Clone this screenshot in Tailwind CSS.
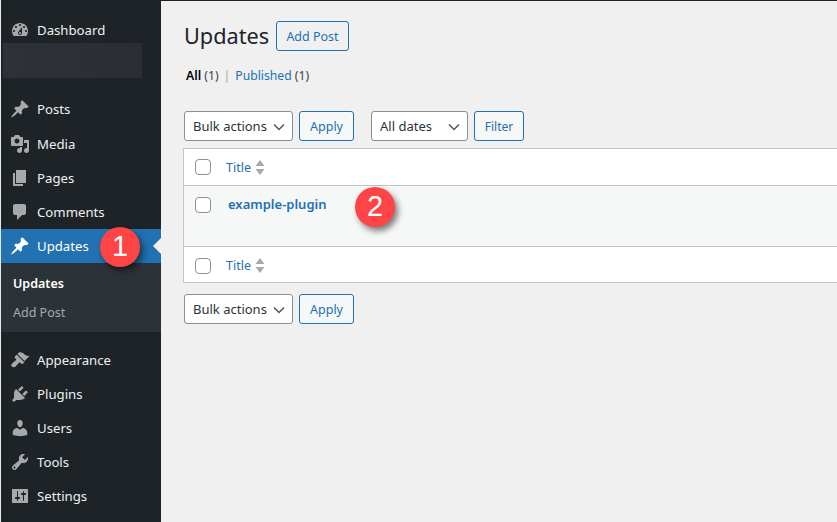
<!DOCTYPE html>
<html lang="en">
<head>
    <meta charset="UTF-8">
    <title>Updates</title>
    <script src="https://cdn.jsdelivr.net/npm/@tailwindcss/browser@4"></script>
</head>
<body class="w-[837px] h-[522px] overflow-hidden font-['Noto_Sans','Open_Sans',sans-serif] bg-[#f0f0f1]">
<div class="relative flex h-[522px] w-[837px] overflow-hidden">

    <!-- sidebar -->
    <aside class="w-[161px] h-full shrink-0 bg-[#1d2327] border-l border-[#e8e8e8] text-[13.2px] text-[#f0f0f1] [&>a]:pt-[2px] [&_svg]:-mt-[2px]">
        <a class="flex items-center h-[34px] mt-[13px] pl-[9px] gap-[7px]">
            <svg class="w-5 h-5 fill-[#a7aaad]" viewBox="0 0 20 20"><path d="M3.76 16h12.48c1.1-1.37 1.76-3.11 1.76-5 0-4.42-3.58-8-8-8s-8 3.58-8 8c0 1.89.66 3.63 1.76 5zM10 4c.55 0 1 .45 1 1s-.45 1-1 1-1-.45-1-1 .45-1 1-1zM6 6c.55 0 1 .45 1 1s-.45 1-1 1-1-.45-1-1 .45-1 1-1zm8 0c.55 0 1 .45 1 1s-.45 1-1 1-1-.45-1-1 .45-1 1-1zm-5.37 5.55L12 7v6c0 1.1-.9 2-2 2s-2-.9-2-2c0-.57.24-1.08.63-1.45zM4 10c.55 0 1 .45 1 1s-.45 1-1 1-1-.45-1-1 .45-1 1-1zm12 0c.55 0 1 .45 1 1s-.45 1-1 1-1-.45-1-1 .45-1 1-1zm-5 3c0-.55-.45-1-1-1s-1 .45-1 1 .45 1 1 1 1-.45 1-1z"/></svg>
            Dashboard
        </a>
        <div class="w-[139px] h-[35px] -mt-[4px] ml-[2px] bg-gradient-to-r from-[#2e3137] to-[#2a2e34]"></div>

        <a class="flex items-center h-[34px] mt-[14px] pl-[9px] gap-[7px]">
            <svg class="w-5 h-5 fill-[#a7aaad]" viewBox="0 0 20 20"><path d="M10.44 3.02l1.82-1.82 6.36 6.35-1.83 1.82c-1.05-.68-2.48-.57-3.41.36l-.75.75c-.92.93-1.04 2.35-.35 3.41l-1.83 1.82-2.41-2.41-2.8 2.79c-.42.42-3.38 2.71-3.8 2.29s1.86-3.39 2.28-3.81l2.79-2.79L4.1 9.36l1.83-1.82c1.05.69 2.48.57 3.4-.36l.75-.75c.93-.92 1.05-2.35.36-3.41z"/></svg>
            Posts
        </a>
        <a class="flex items-center h-[34px] mt-px pl-[9px] gap-[7px]">
            <svg class="w-5 h-5 fill-[#a7aaad]" viewBox="0 0 20 20"><path d="M13 11V4c0-.55-.45-1-1-1h-1.67L9 1H5L3.67 3H2c-.55 0-1 .45-1 1v7c0 .55.45 1 1 1h10c.55 0 1-.45 1-1zM7 4.5c1.38 0 2.5 1.12 2.5 2.5S8.38 9.5 7 9.5 4.5 8.38 4.5 7 5.62 4.5 7 4.5zM14 6h5v10.5c0 1.38-1.12 2.5-2.5 2.5S14 17.88 14 16.5s1.12-2.5 2.5-2.5c.17 0 .34.02.5.05V9h-3V6zm-4 8.05V13h2v3.5c0 1.38-1.12 2.5-2.5 2.5S7 17.88 7 16.5 8.12 14 9.5 14c.17 0 .34.02.5.05z"/></svg>
            Media
        </a>
        <a class="flex items-center h-[34px] pl-[9px] gap-[7px]">
            <svg class="w-5 h-5 fill-[#a7aaad]" viewBox="0 0 20 20"><path d="M6 15V2h10v13H6zm-1 1h8v2H3V5h2v11z"/></svg>
            Pages
        </a>
        <a class="flex items-center h-[34px] pl-[9px] gap-[7px]">
            <svg class="w-5 h-5 fill-[#a7aaad]" viewBox="0 0 20 20"><path d="M5 2h9c1.1 0 2 .9 2 2v7c0 1.1-.9 2-2 2h-2l-5 5v-5H5c-1.1 0-2-.9-2-2V4c0-1.1.9-2 2-2z"/></svg>
            Comments
        </a>

        <!-- current item -->
        <a class="relative flex items-center h-[34px] pl-[9px] gap-[7px] bg-[#2271b1] text-white">
            <svg class="w-5 h-5 fill-white" viewBox="0 0 20 20"><path d="M10.44 3.02l1.82-1.82 6.36 6.35-1.83 1.82c-1.05-.68-2.48-.57-3.41.36l-.75.75c-.92.93-1.04 2.35-.35 3.41l-1.83 1.82-2.41-2.41-2.8 2.79c-.42.42-3.38 2.71-3.8 2.29s1.86-3.39 2.28-3.81l2.79-2.79L4.1 9.36l1.83-1.82c1.05.69 2.48.57 3.4-.36l.75-.75c.93-.92 1.05-2.35.36-3.41z"/></svg>
            Updates
            <span class="absolute right-0 top-[9px] border-y-[8px] border-r-[8px] border-y-transparent border-r-[#f0f0f1]"></span>
        </a>
        <div class="h-[69px] bg-[#2c3338] pt-[7px] text-[12.5px]">
            <a class="flex items-center h-[29px] pl-[12px] font-semibold text-white">Updates</a>
            <a class="flex items-center h-[29px] pl-[12px] text-[#a7aaad]">Add Post</a>
        </div>

        <a class="flex items-center h-[34px] mt-[11px] pl-[9px] gap-[7px]">
            <svg class="w-5 h-5 fill-[#a7aaad]" viewBox="0 0 20 20"><path d="M14.48 11.06L7.41 3.99l1.5-1.5c.5-.56 2.3-.47 3.51.32 1.21.8 1.43 1.28 2.91 2.1 1.18.64 2.45 1.26 4.45.85zm-.71.71L6.7 4.7 4.93 6.47c-.39.39-.39 1.02 0 1.41l1.06 1.06c.39.39.39 1.03 0 1.42-.6.6-1.43 1.11-2.21 1.69-.35.26-.7.53-1.01.84C1.43 13.71.96 15.12 1.5 16.07c.54.96 1.96 1.41 3.44.75.34-.15.69-.36 1.02-.66.5-.45.96-1.03 1.43-1.6.47-.58.94-1.2 1.53-1.8.39-.39 1.03-.39 1.42 0l1.05 1.05c.39.39 1.03.39 1.42 0l1.96-1.96z"/></svg>
            Appearance
        </a>
        <a class="flex items-center h-[34px] pl-[9px] gap-[7px]">
            <svg class="w-5 h-5 fill-[#a7aaad]" viewBox="0 0 20 20"><path d="M13.11 4.36L9.87 7.6 8 5.73l3.24-3.24c.35-.34 1.05-.2 1.56.32.52.51.66 1.21.31 1.55zm-8 1.77l.91-1.12 9.01 9.01-1.19.84c-.71.71-2.63 1.16-3.82 1.16H6.14L4.9 17.26c-.59.59-1.54.59-2.12 0-.59-.58-.59-1.53 0-2.12l1.24-1.24v-3.88c0-1.13.4-3.19 1.09-3.89zm7.26 3.97l3.24-3.24c.34-.35 1.04-.21 1.55.31.52.51.66 1.21.31 1.55l-3.24 3.25z"/></svg>
            Plugins
        </a>
        <a class="flex items-center h-[34px] pl-[9px] gap-[7px]">
            <svg class="w-5 h-5 fill-[#a7aaad]" viewBox="0 0 20 20"><path d="M10 9.25c-2.27 0-2.73-3.44-2.73-3.44C7 4.02 7.82 2 9.97 2c2.16 0 2.98 2.02 2.71 3.81 0 0-.41 3.44-2.68 3.44zm0 2.57L12.72 10c2.39 0 4.52 2.33 4.52 4.53v2.49s-3.65 1.13-7.24 1.13c-3.65 0-7.24-1.13-7.24-1.13v-2.49c0-2.25 1.94-4.48 4.47-4.48z"/></svg>
            Users
        </a>
        <a class="flex items-center h-[34px] pl-[9px] gap-[7px]">
            <svg class="w-5 h-5 fill-[#a7aaad]" viewBox="0 0 20 20"><path d="M16.68 9.77c-1.34 1.34-3.3 1.67-4.95.99l-5.41 6.52c-.99.99-2.59.99-3.58 0s-.99-2.59 0-3.57l6.52-5.42c-.68-1.65-.35-3.61.99-4.95 1.28-1.28 3.12-1.62 4.72-1.06l-2.89 2.89 2.82 2.82 2.86-2.87c.53 1.58.18 3.39-1.08 4.65zM3.81 16.21c.4.39 1.04.39 1.43 0 .4-.4.4-1.04 0-1.43-.39-.4-1.03-.4-1.43 0-.39.39-.39 1.03 0 1.43z"/></svg>
            Tools
        </a>
        <a class="flex items-center h-[34px] pl-[9px] gap-[7px]">
            <svg class="w-5 h-5 fill-[#a7aaad]" viewBox="0 0 20 20"><path fill-rule="evenodd" d="M18 16V4c0-.55-.45-1-1-1H3c-.55 0-1 .45-1 1v12c0 .55.45 1 1 1h14c.55 0 1-.45 1-1zM8 11h1c.55 0 1 .45 1 1s-.45 1-1 1H8v1.5c0 .28-.22.5-.5.5s-.5-.22-.5-.5V13H6c-.55 0-1-.45-1-1s.45-1 1-1h1V5.5c0-.28.22-.5.5-.5s.5.22.5.5V11zm5-2h-1c-.55 0-1-.45-1-1s.45-1 1-1h1V5.5c0-.28.22-.5.5-.5s.5.22.5.5V7h1c.55 0 1 .45 1 1s-.45 1-1 1h-1v5.5c0 .28-.22.5-.5.5s-.5-.22-.5-.5V9z"/></svg>
            Settings
        </a>
    </aside>

    <!-- content -->
    <main class="flex-1 min-w-0 border-t border-[#1d2327] pl-[23px] text-[13px] text-[#3c434a]">
        <div class="flex items-center h-[30px] mt-[20px]">
            <h1 class="w-[92px] text-[21.7px] leading-[30px] text-[#1d2327]">Updates</h1>
            <a class="flex items-center justify-center w-[73px] h-[30px] pt-[2px] rounded-[3px] border border-[#2271b1] text-[#2271b1] text-[12.5px]">Add Post</a>
        </div>

        <div class="flex items-center h-[18px] mt-[16px] ml-[2px] gap-[5px] text-[12.2px]">
            <span><b class="font-semibold text-black">All</b> (1)</span>
            <span class="text-[#a7aaad]">|</span>
            <span><a class="text-[#2271b1]">Published</a> (1)</span>
        </div>

        <div class="flex h-[30px] mt-[26px]">
            <div class="flex items-center justify-between w-[109px] h-[30px] pl-2 pr-[7px] pt-[2px] rounded-[3px] border border-[#8c8f94] bg-white text-[13px] text-[#2c3338]">
                Bulk actions
                <svg class="w-3 h-3 stroke-[#50575e] fill-none" viewBox="0 0 12 12"><path d="M1 3.5l5 5 5-5" stroke-width="1.5"/></svg>
            </div>
            <a class="flex items-center justify-center w-[55px] h-[30px] ml-[6px] pt-[2px] rounded-[3px] border border-[#2271b1] bg-[#f6f7f7] text-[#2271b1] text-[12.5px]">Apply</a>
            <div class="flex items-center justify-between w-[97px] h-[30px] ml-[17px] pl-2 pr-[7px] pt-[2px] rounded-[3px] border border-[#8c8f94] bg-white text-[13px] text-[#2c3338]">
                All dates
                <svg class="w-3 h-3 stroke-[#50575e] fill-none" viewBox="0 0 12 12"><path d="M1 3.5l5 5 5-5" stroke-width="1.5"/></svg>
            </div>
            <a class="flex items-center justify-center w-[50px] h-[30px] ml-[6px] pt-[2px] rounded-[3px] border border-[#2271b1] bg-[#f6f7f7] text-[#2271b1] text-[12px]">Filter</a>
        </div>

        <div class="w-[700px] h-[135px] mt-[7px] -ml-px border border-[#c3c4c7] bg-white">
            <div class="flex items-center h-[37px] pl-[11px] border-b border-[#c3c4c7]">
                <span class="w-4 h-4 rounded-[4px] border border-[#8c8f94] bg-white"></span>
                <a class="ml-[15px] mt-[2px] text-[#2271b1] text-[12.5px]">Title</a>
                <svg class="ml-[4px] w-[10px] h-[15px] fill-[#a7aaad]" viewBox="0 0 10 15"><path d="M5 0l4.5 6h-9zM5 15L.5 9h9z"/></svg>
            </div>
            <div class="flex h-[61px] pt-[10px] pl-[11px] bg-[#f6f7f7] border-b border-[#c3c4c7]">
                <span class="w-4 h-4 mt-px rounded-[4px] border border-[#8c8f94] bg-white"></span>
                <a class="ml-[17px] -mt-px text-[#2271b1] text-[13px] leading-[18px] font-semibold">example-plugin</a>
            </div>
            <div class="flex items-center h-[35px] pl-[11px] pt-[2px]">
                <span class="w-4 h-4 rounded-[4px] border border-[#8c8f94] bg-white"></span>
                <a class="ml-[15px] mt-[2px] text-[#2271b1] text-[12.5px]">Title</a>
                <svg class="ml-[4px] w-[10px] h-[15px] fill-[#a7aaad]" viewBox="0 0 10 15"><path d="M5 0l4.5 6h-9zM5 15L.5 9h9z"/></svg>
            </div>
        </div>

        <div class="flex h-[30px] mt-[11px]">
            <div class="flex items-center justify-between w-[109px] h-[30px] pl-2 pr-[7px] pt-[2px] rounded-[3px] border border-[#8c8f94] bg-white text-[13px] text-[#2c3338]">
                Bulk actions
                <svg class="w-3 h-3 stroke-[#50575e] fill-none" viewBox="0 0 12 12"><path d="M1 3.5l5 5 5-5" stroke-width="1.5"/></svg>
            </div>
            <a class="flex items-center justify-center w-[55px] h-[30px] ml-[6px] pt-[2px] rounded-[3px] border border-[#2271b1] bg-[#f6f7f7] text-[#2271b1] text-[12.5px]">Apply</a>
        </div>
    </main>

    <!-- callout badges over the page -->
    <span class="absolute left-[100px] top-[227px] flex items-center justify-center w-10 h-10 rounded-full bg-[#fe4445] text-white text-[29px] font-['Liberation_Sans',sans-serif] shadow-[3px_4px_6px_rgba(0,0,0,0.5)]">1</span>
    <span class="absolute left-[355px] top-[187px] flex items-center justify-center w-10 h-10 rounded-full bg-[#fe4445] text-white text-[29px] font-['Liberation_Sans',sans-serif] shadow-[3px_4px_6px_rgba(0,0,0,0.5)]">2</span>
</div>
</body>
</html>
